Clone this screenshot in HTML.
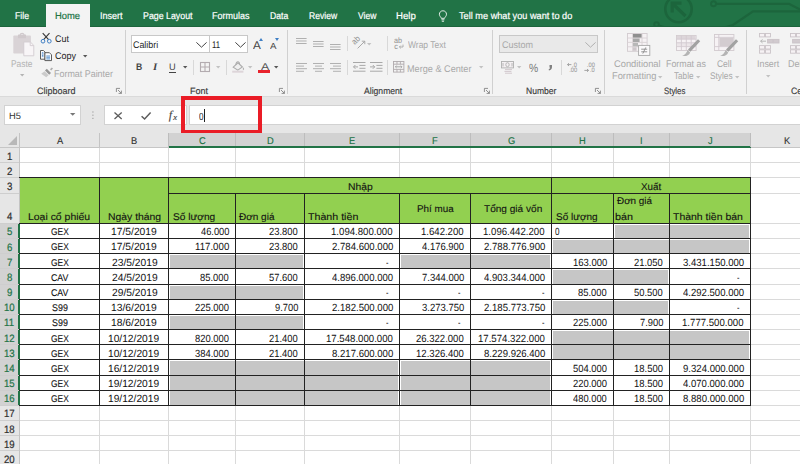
<!DOCTYPE html>
<html><head><meta charset="utf-8"><title>Excel</title>
<style>
html,body{margin:0;padding:0;}
body{width:800px;height:464px;overflow:hidden;background:#fff;position:relative;font-family:"Liberation Sans",sans-serif;text-rendering:geometricPrecision;}
div,span{position:absolute;box-sizing:border-box;white-space:nowrap;}
svg{position:absolute;overflow:visible;}
.x{transform-origin:0 0;line-height:1;}
.sep{width:1px;background:#d0d0d0;}
</style></head><body>

<div style="left:0;top:0;width:800px;height:27px;background:#217346"></div>
<svg style="left:0;top:0" width="800" height="27" viewBox="0 0 800 27"><g fill="none" stroke="#1c653c" stroke-width="2.6">
<circle cx="678.5" cy="9" r="13.2"/>
<path d="M685.5 16 L673 4 M672.2 12.5 L672.2 3.2 L681.5 3.2" stroke-width="3.2"/>
<circle cx="713.5" cy="3.8" r="2.5" stroke-width="1.9"/>
<path d="M716.2 3.8 L789 3.8 L800 9.5" stroke-width="2.3"/>
<path d="M800 11.3 L753 11.3 L733 25 L726 27" stroke-width="2.3"/>
<circle cx="656.5" cy="24.5" r="2.3" stroke-width="1.9"/>
<path d="M658.8 25.5 L664 27" stroke-width="2"/>
</g></svg>
<div style="left:0;top:26px;width:800px;height:1px;background:#1c643c"></div>
<div style="left:46px;top:4px;width:44px;height:24px;background:#f3f3f3"></div>
<svg style="left:438.2px;top:9.8px" width="10.4" height="13" viewBox="0 0 12 15"><g fill="none" stroke="#fff" stroke-width="1">
<path d="M3.8 9.6 C3.6 8.2 1.6 7.2 1.6 4.9 C1.6 2.6 3.4 0.9 5.7 0.9 C8 0.9 9.8 2.6 9.8 4.9 C9.8 7.2 7.8 8.2 7.6 9.6 Z"/>
<path d="M4 11.3 H7.4 M4.4 13 H7"/></g></svg>
<div style="left:0;top:27px;width:800px;height:70px;background:#f3f3f3"></div>
<div style="left:46px;top:26px;width:44px;height:2px;background:#f3f3f3"></div>
<div style="left:0;top:97px;width:800px;height:51px;background:#e6e6e6"></div>
<div style="left:0;top:96px;width:800px;height:1px;background:#dadada"></div>
<div class="sep" style="left:125px;top:30px;height:64px"></div>
<div class="sep" style="left:287px;top:30px;height:64px"></div>
<div class="sep" style="left:492px;top:30px;height:64px"></div>
<div class="sep" style="left:604px;top:30px;height:64px"></div>
<div class="sep" style="left:746px;top:30px;height:64px"></div>
<div class="sep" style="left:193px;top:60px;height:15px;background:#d8d8d8"></div>
<div class="sep" style="left:226px;top:60px;height:15px;background:#d8d8d8"></div>
<div class="sep" style="left:347px;top:36px;height:15px;background:#d8d8d8"></div>
<div class="sep" style="left:387px;top:36px;height:15px;background:#d8d8d8"></div>
<div class="sep" style="left:347px;top:60px;height:15px;background:#d8d8d8"></div>
<div class="sep" style="left:387px;top:60px;height:15px;background:#d8d8d8"></div>
<div class="sep" style="left:561px;top:60px;height:15px;background:#d8d8d8"></div>
<svg style="left:13px;top:33px" width="22" height="23" viewBox="0 0 22 23">
<rect x="0.3" y="2.6" width="17.6" height="18" rx="0.8" fill="#d9d3d6"/>
<rect x="5" y="1.6" width="8" height="3.6" fill="#d0c9cc"/>
<path d="M7 2 a2.2 2.2 0 0 1 4.2 0" fill="none" stroke="#d0c9cc" stroke-width="1.2"/>
<path d="M10.8 9 H17.4 L20.8 12.4 V22.8 H10.8 Z" fill="#f8f5f7" stroke="#d2ccd0" stroke-width="0.9"/>
<path d="M17.2 9.2 V12.6 H20.6" fill="none" stroke="#d2ccd0" stroke-width="0.9"/>
</svg>
<svg style="left:19.6px;top:74.39999999999999px" width="4.4" height="2.4" viewBox="0 0 4.4 2.4"><path d="M0 0 H4.4 L2.2 2.4 Z" fill="#b4b4b4"/></svg>
<svg style="left:39.9px;top:32.6px" width="12" height="11" viewBox="0 0 12 11"><g fill="none">
<path d="M2.7 0.1 L8.6 6.6 M9.5 0.1 L3.6 6.6" stroke="#3a3a3a" stroke-width="1.15"/>
<circle cx="3" cy="8.2" r="1.85" stroke="#3f7fc4" stroke-width="1"/>
<circle cx="9.3" cy="8.2" r="1.85" stroke="#3f7fc4" stroke-width="1"/></g></svg>
<svg style="left:40.3px;top:49.8px" width="12" height="11" viewBox="0 0 12 11"><g>
<path d="M0.5 0.5 H3.4 L5 2.1 V9.2 H0.5 Z" fill="#fff" stroke="#4a4a4a" stroke-width="0.9"/>
<rect x="1.5" y="2.4" width="2.4" height="5" fill="#cfe0f2"/>
<path d="M2.7 2.2 V3.6 M2.7 4.6 V6.6" stroke="#3f7fc4" stroke-width="0.9"/>
<path d="M4.9 2.7 H9.4 L11.5 4.8 V10.6 H4.9 Z" fill="#fff" stroke="#4a4a4a" stroke-width="0.9"/>
<rect x="6.2" y="5.4" width="4" height="4" fill="#c6dbf0"/>
<path d="M6.4 6 H10 M6.4 7.6 H10 M6.4 9 H10" stroke="#5b93cf" stroke-width="0.7"/></g></svg>
<svg style="left:82.8px;top:54.8px" width="4.4" height="2.4" viewBox="0 0 4.4 2.4"><path d="M0 0 H4.4 L2.2 2.4 Z" fill="#555"/></svg>
<svg style="left:40.5px;top:67.4px" width="12" height="10.5" viewBox="0 0 12 10.5"><g>
<path d="M9 2.2 L10.8 0.4 L12 1.6 L10.2 3.4 Z" fill="#ababab"/>
<path d="M5.8 1.8 L10 6 L8.2 7.8 L4 3.6 Z" fill="#979797"/>
<path d="M3.6 4.2 L7.6 8.2 L5.2 10.3 L0.2 6.8 Z" fill="#cbcbcb"/></g></svg>
<svg style="left:116px;top:88.4px" width="6" height="6" viewBox="0 0 6 6"><g fill="none" stroke="#777" stroke-width="0.8"><path d="M0.4 4 V0.4 H4"/><path d="M2 2 L5.4 5.4 M5.4 2.6 V5.4 H2.6"/></g></svg>
<div style="left:131px;top:35px;width:79px;height:18px;background:#fff;border:1px solid #c8c8c8"></div>
<div style="left:209px;top:35px;width:39px;height:18px;background:#fff;border:1px solid #c8c8c8"></div>
<svg style="left:196px;top:42.4px" width="11" height="6" viewBox="0 0 11 6"><path d="M0.4 0.4 L5.5 5.2 L10.6 0.4" fill="none" stroke="#444" stroke-width="1"/></svg>
<svg style="left:234.5px;top:42.4px" width="11" height="6" viewBox="0 0 11 6"><path d="M0.4 0.4 L5.5 5.2 L10.6 0.4" fill="none" stroke="#444" stroke-width="1"/></svg>
<svg style="left:258.8px;top:38.4px" width="4" height="3" viewBox="0 0 4 3"><path d="M0 3 L2 0 L4 3 Z" fill="#3f7fc4"/></svg>
<svg style="left:275.2px;top:38.4px" width="4" height="3" viewBox="0 0 4 3"><path d="M0 0 H4 L2 3 Z" fill="#3f7fc4"/></svg>
<div style="left:169.4px;top:71.6px;width:6.6px;height:1px;background:#444"></div>
<svg style="left:183.0px;top:66.39999999999999px" width="4.4" height="2.4" viewBox="0 0 4.4 2.4"><path d="M0 0 H4.4 L2.2 2.4 Z" fill="#555"/></svg>
<svg style="left:200.4px;top:62.2px" width="10" height="10" viewBox="0 0 10 10"><g fill="none" stroke="#b3acb0" stroke-width="1.1"><rect x="0.5" y="0.5" width="9" height="9"/><path d="M5 0.5 V9.5 M0.5 5 H9.5"/></g></svg>
<svg style="left:216.20000000000002px;top:66.39999999999999px" width="4.4" height="2.4" viewBox="0 0 4.4 2.4"><path d="M0 0 H4.4 L2.2 2.4 Z" fill="#c2c2c2"/></svg>
<svg style="left:232.4px;top:61px" width="13" height="12" viewBox="0 0 13 12"><g fill="none" stroke="#adadad" stroke-width="1.1">
<path d="M1.2 6.2 L6 1.8 L10.4 6 L5.8 9.2 Z" fill="#efefef"/><path d="M3.8 3.8 Q4.4 0.4 6.2 0.8 Q7.6 1.2 7.6 3.2"/></g>
<path d="M11.4 6.2 q1.5 2.2 0 3 q-1.5 -0.8 0 -3" fill="#adadad"/>
<rect x="0.2" y="9.7" width="11.2" height="2" fill="#ddd5d9"/></svg>
<svg style="left:248.4px;top:66.39999999999999px" width="4.4" height="2.4" viewBox="0 0 4.4 2.4"><path d="M0 0 H4.4 L2.2 2.4 Z" fill="#c2c2c2"/></svg>
<div style="left:258px;top:70.4px;width:12px;height:3px;background:#e8232d"></div>
<svg style="left:274.40000000000003px;top:66.39999999999999px" width="4.4" height="2.4" viewBox="0 0 4.4 2.4"><path d="M0 0 H4.4 L2.2 2.4 Z" fill="#555"/></svg>
<svg style="left:278.6px;top:88.4px" width="6" height="6" viewBox="0 0 6 6"><g fill="none" stroke="#777" stroke-width="0.8"><path d="M0.4 4 V0.4 H4"/><path d="M2 2 L5.4 5.4 M5.4 2.6 V5.4 H2.6"/></g></svg>
<svg style="left:296.3px;top:37.8px" width="11" height="7.5" viewBox="0 0 11 7.5"><g stroke="#a4a4a4" stroke-width="0.85"><path d="M0 0.5 H10.6"/><path d="M0 3.0 H10.6"/><path d="M0 5.5 H10.6"/></g></svg>
<svg style="left:313px;top:40.6px" width="11" height="7.5" viewBox="0 0 11 7.5"><g stroke="#a4a4a4" stroke-width="0.85"><path d="M0 0.5 H10.6"/><path d="M0 3.0 H10.6"/><path d="M0 5.5 H10.6"/></g></svg>
<svg style="left:329.7px;top:43.6px" width="11" height="7.5" viewBox="0 0 11 7.5"><g stroke="#a4a4a4" stroke-width="0.85"><path d="M0 0.5 H10.6"/><path d="M0 3.0 H10.6"/><path d="M0 5.5 H10.6"/></g></svg>
<svg style="left:296.3px;top:62.6px" width="11" height="10.4" viewBox="0 0 11 10.4"><g stroke="#a4a4a4" stroke-width="0.85"><path d="M0 0.5 H11"/><path d="M0 3.1 H8"/><path d="M0 5.7 H11"/><path d="M0 8.3 H8"/></g></svg>
<svg style="left:313px;top:62.6px" width="11" height="10.4" viewBox="0 0 11 10.4"><g stroke="#a4a4a4" stroke-width="0.85"><path d="M0.0 0.5 H11.0"/><path d="M2.0 3.1 H9.0"/><path d="M0.0 5.7 H11.0"/><path d="M2.0 8.3 H9.0"/></g></svg>
<svg style="left:329.5px;top:62.6px" width="11" height="10.4" viewBox="0 0 11 10.4"><g stroke="#a4a4a4" stroke-width="0.85"><path d="M0 0.5 H11"/><path d="M3 3.1 H11"/><path d="M0 5.7 H11"/><path d="M3 8.3 H11"/></g></svg>
<svg style="left:352.5px;top:37.4px" width="13" height="12" viewBox="0 0 13 12"><g fill="none" stroke="#a2a2a2" stroke-width="0.9">
<path d="M4.6 11.4 L11.6 4.4 M8.8 4.2 H11.8 V7.2"/></g>
<text x="0" y="0" font-size="8.4" fill="#8e8e8e" font-family="Liberation Sans" transform="translate(1.8 8) rotate(-45) scale(0.88 1)">ab</text></svg>
<svg style="left:367.40000000000003px;top:42.8px" width="4.4" height="2.4" viewBox="0 0 4.4 2.4"><path d="M0 0 H4.4 L2.2 2.4 Z" fill="#c2c2c2"/></svg>
<svg style="left:352.5px;top:62.2px" width="12.5" height="10" viewBox="0 0 12.5 10"><g fill="none" stroke="#a8a8a8" stroke-width="1"><path d="M0 0.5 H12.5 M6.4 3.4 H12.5 M6.4 6.3 H12.5 M0 9.2 H12.5"/><path d="M5 4.9 H0.6 M2.4 3 L0.5 4.9 L2.4 6.8"/></g></svg>
<svg style="left:369.5px;top:62.2px" width="12.5" height="10" viewBox="0 0 12.5 10"><g fill="none" stroke="#a8a8a8" stroke-width="1"><path d="M0 0.5 H12.5 M6.4 3.4 H12.5 M6.4 6.3 H12.5 M0 9.2 H12.5"/><path d="M0 4.9 H4.6 M2.8 3 L4.7 4.9 L2.8 6.8"/></g></svg>
<svg style="left:394px;top:38.4px" width="11" height="11" viewBox="0 0 11 11">
<text x="0" y="5.2" font-size="8" fill="#909090" font-family="Liberation Sans" transform="scale(0.9 1)">ab</text>
<text x="0.2" y="11" font-size="8" fill="#909090" font-family="Liberation Sans" transform="scale(0.9 1)">c</text>
<path d="M9 6.6 V9 H5.4 M6.8 7.6 L5.4 9 L6.8 10.4" fill="none" stroke="#a0a0a0" stroke-width="0.8"/></svg>
<svg style="left:392.8px;top:61.2px" width="11.4" height="11.6" viewBox="0 0 11.4 11.6"><g fill="none" stroke="#b0aaad" stroke-width="0.9">
<rect x="0.5" y="0.5" width="10.4" height="10.6"/><path d="M0.5 3.2 H10.9 M0.5 8.4 H10.9 M4 0.5 V3.2 M7.4 0.5 V3.2 M4 8.4 V11.1 M7.4 8.4 V11.1"/>
<path d="M2.4 5.8 H9 M3.6 4.6 L2.4 5.8 L3.6 7 M7.8 4.6 L9 5.8 L7.8 7" stroke="#a0a0a0"/></g></svg>
<svg style="left:478.6px;top:66.39999999999999px" width="4.4" height="2.4" viewBox="0 0 4.4 2.4"><path d="M0 0 H4.4 L2.2 2.4 Z" fill="#c2c2c2"/></svg>
<svg style="left:483.6px;top:88.4px" width="6" height="6" viewBox="0 0 6 6"><g fill="none" stroke="#777" stroke-width="0.8"><path d="M0.4 4 V0.4 H4"/><path d="M2 2 L5.4 5.4 M5.4 2.6 V5.4 H2.6"/></g></svg>
<div style="left:499px;top:35px;width:99px;height:18px;background:#e9e9e9;border:1px solid #c8c8c8"></div>
<svg style="left:584.6px;top:42.4px" width="11" height="6" viewBox="0 0 11 6"><path d="M0.4 0.4 L5.5 5.2 L10.6 0.4" fill="none" stroke="#b0b0b0" stroke-width="1"/></svg>
<svg style="left:501.2px;top:60.8px" width="13" height="13" viewBox="0 0 13 13"><g fill="none" stroke="#b0b0b0" stroke-width="0.9">
<rect x="0.5" y="0.5" width="12" height="6.4" fill="#f4f0f2"/><ellipse cx="6.5" cy="3.7" rx="1.7" ry="2"/><path d="M2 2 V5.4 M11 2 V5.4"/></g>
<g fill="none" stroke="#d2c8cd" stroke-width="1"><path d="M4 8.6 H11 M3.4 10.4 H10.4 M4 12.2 H11"/></g></svg>
<svg style="left:517.3px;top:66.39999999999999px" width="4.4" height="2.4" viewBox="0 0 4.4 2.4"><path d="M0 0 H4.4 L2.2 2.4 Z" fill="#c2c2c2"/></svg>
<svg style="left:547.6px;top:64.6px" width="4.4" height="5.6" viewBox="0 0 4.4 5.6"><path d="M1.5 0 H4 V2 Q4 4.6 1 5.4 L0.6 4.6 Q2 4 2 2.4 H1.5 Z" fill="#808080"/></svg>
<svg style="left:567px;top:61.8px" width="12" height="11" viewBox="0 0 12 11"><g fill="#8e8e8e" font-family="Liberation Sans" font-size="6.4"><text x="5.6" y="4.6" transform="scale(0.9 1)">.0</text><text x="2.4" y="10.4" transform="scale(0.9 1)">.00</text><path d="M4.4 2.6 H0.6 M2 1.2 L0.5 2.6 L2 4" fill="none" stroke="#8e8e8e" stroke-width="0.8"/></g></svg>
<svg style="left:584.4px;top:61.8px" width="12" height="11" viewBox="0 0 12 11"><g fill="#8e8e8e" font-family="Liberation Sans" font-size="6.4"><text x="3.2" y="4.6" transform="scale(0.9 1)">.00</text><text x="6.6" y="10.4" transform="scale(0.9 1)">.0</text><path d="M0.4 8.4 H4.4 M3 7 L4.5 8.4 L3 9.8" fill="none" stroke="#8e8e8e" stroke-width="0.8"/></g></svg>
<svg style="left:595px;top:88.4px" width="6" height="6" viewBox="0 0 6 6"><g fill="none" stroke="#777" stroke-width="0.8"><path d="M0.4 4 V0.4 H4"/><path d="M2 2 L5.4 5.4 M5.4 2.6 V5.4 H2.6"/></g></svg>
<svg style="left:626.8px;top:33.2px" width="24" height="23" viewBox="0 0 24 23">
<rect x="0.5" y="0.5" width="19.6" height="17.8" fill="#f6f2f4" stroke="#d2cbcf" stroke-width="0.9"/>
<path d="M5.6 0.5 V18.2 M15 0.5 V18.2 M0.5 5 H20 M0.5 9.4 H20 M0.5 13.8 H20" stroke="#d8d1d5" stroke-width="0.9" fill="none"/>
<rect x="6" y="1" width="8.6" height="3.6" fill="#8f8f8f"/><rect x="6" y="5.5" width="6.6" height="3.5" fill="#a8a8a8"/>
<rect x="6" y="9.9" width="5" height="3.5" fill="#b8b8b8"/><rect x="6" y="14.3" width="3.6" height="3.5" fill="#cfc8cc"/>
<rect x="11.6" y="12.4" width="11.2" height="10" fill="#fbfafb" stroke="#a8a8a8" stroke-width="0.9"/>
<path d="M14.2 16.2 H20.2 M14.2 18.8 H20.2 M18.8 14.4 L15.8 20.6" stroke="#8c8c8c" stroke-width="0.9" fill="none"/></svg>
<svg style="left:658.4px;top:76.39999999999999px" width="4.4" height="2.4" viewBox="0 0 4.4 2.4"><path d="M0 0 H4.4 L2.2 2.4 Z" fill="#c2c2c2"/></svg>
<svg style="left:675.6px;top:33.6px" width="25" height="23" viewBox="0 0 25 23">
<rect x="0.5" y="1.5" width="19.6" height="15" fill="#f6f2f4" stroke="#d2cbcf" stroke-width="0.9"/>
<rect x="0.9" y="1.9" width="18.8" height="3.2" fill="#ddd6da"/>
<rect x="0.9" y="8.6" width="18.8" height="3.4" fill="#ebe5e8"/>
<path d="M5.4 1.5 V16.5 M10.3 1.5 V16.5 M15.2 1.5 V16.5 M0.5 5.2 H20 M0.5 8.8 H20 M0.5 12.6 H20" stroke="#d2cbd0" stroke-width="0.9" fill="none"/>
<path d="M24.2 7.2 L22 5.2 L12 15.6 L14.4 17.8 Z" fill="#a2a2a2"/>
<path d="M11.6 16 L14.2 18.4 Q12.2 22.8 6.2 22 Q10 20.6 11.6 16 Z" fill="#b4b4b4"/></svg>
<svg style="left:695.8px;top:76.39999999999999px" width="4.4" height="2.4" viewBox="0 0 4.4 2.4"><path d="M0 0 H4.4 L2.2 2.4 Z" fill="#c2c2c2"/></svg>
<svg style="left:713.8px;top:33.6px" width="25" height="23" viewBox="0 0 25 23">
<rect x="0.5" y="0.5" width="19.4" height="16" fill="#f6f2f4" stroke="#d2cbcf" stroke-width="0.9"/>
<path d="M0.5 3.4 H19.8 M0.5 12.6 H19.8 M4.8 0.5 V16.5" stroke="#d2cbd0" stroke-width="0.9" fill="none"/>
<rect x="5.4" y="3.9" width="14" height="8.2" fill="#d3ccd0"/>
<path d="M24.2 7.2 L22 5.2 L12 15.6 L14.4 17.8 Z" fill="#a2a2a2"/>
<path d="M11.6 16 L14.2 18.4 Q12.2 22.8 6.2 22 Q10 20.6 11.6 16 Z" fill="#b4b4b4"/></svg>
<svg style="left:734.5999999999999px;top:76.39999999999999px" width="4.4" height="2.4" viewBox="0 0 4.4 2.4"><path d="M0 0 H4.4 L2.2 2.4 Z" fill="#c2c2c2"/></svg>
<svg style="left:758.6px;top:33.4px" width="21" height="21" viewBox="0 0 21 21"><g fill="#f6f2f4" stroke="#cbc4c8" stroke-width="0.9">
<rect x="0.5" y="0.5" width="5" height="3.4"/><rect x="6.5" y="0.5" width="5" height="3.4"/>
<rect x="8.6" y="6.4" width="5.4" height="3.6" fill="#d2cbcf"/><rect x="14.6" y="6.4" width="5.4" height="3.6" fill="#d2cbcf"/>
<rect x="0.5" y="12.6" width="5" height="3.4"/><rect x="6.5" y="12.6" width="5" height="3.4"/>
<rect x="0.5" y="16.8" width="5" height="3.4"/><rect x="6.5" y="16.8" width="5" height="3.4"/>
<path d="M7 8.2 H1.6 M3.6 6.4 L1.6 8.2 L3.6 10" fill="none" stroke="#b0b0b0"/></g></svg>
<svg style="left:766.0px;top:74.6px" width="4.4" height="2.4" viewBox="0 0 4.4 2.4"><path d="M0 0 H4.4 L2.2 2.4 Z" fill="#c2c2c2"/></svg>
<svg style="left:790px;top:33.4px" width="12" height="21" viewBox="0 0 12 21"><g fill="#f6f2f4" stroke="#cbc4c8" stroke-width="0.9">
<rect x="0.5" y="0.5" width="5" height="3.4"/><rect x="6.5" y="0.5" width="5" height="3.4"/>
<rect x="2.6" y="6.4" width="9" height="3.6" fill="#d2cbcf"/>
<rect x="0.5" y="12.6" width="5" height="3.4"/><rect x="6.5" y="12.6" width="5" height="3.4"/>
<rect x="0.5" y="16.8" width="5" height="3.4"/><rect x="6.5" y="16.8" width="5" height="3.4"/></g></svg>
<div style="left:4px;top:105px;width:77px;height:20px;background:#fff;border:1px solid #d2d2d2"></div>
<svg style="left:70.1px;top:113.39999999999999px" width="5.4" height="2.8" viewBox="0 0 5.4 2.8"><path d="M0 0 H5.4 L2.7 2.8 Z" fill="#777"/></svg>
<svg style="left:91.6px;top:111px" width="2" height="9" viewBox="0 0 2 9"><g fill="#a4a4a4"><rect x="0.3" y="0.4" width="1.2" height="1.2"/><rect x="0.3" y="3.6" width="1.2" height="1.2"/><rect x="0.3" y="6.8" width="1.2" height="1.2"/></g></svg>
<div style="left:104px;top:105px;width:83px;height:20px;background:#fff;border:1px solid #d2d2d2"></div>
<div style="left:189px;top:105px;width:612px;height:20px;background:#fff;border:1px solid #d2d2d2"></div>
<svg style="left:114.2px;top:111.6px" width="8.2" height="7.6" viewBox="0 0 8.2 7.6"><path d="M0.5 0.5 L7.7 7.1 M7.7 0.5 L0.5 7.1" stroke="#5c5c5c" stroke-width="1.3" fill="none"/></svg>
<svg style="left:141px;top:111.6px" width="10" height="8" viewBox="0 0 10 8"><path d="M0.6 4.2 L3.6 7 L9.6 0.6" stroke="#5c5c5c" stroke-width="1.5" fill="none"/></svg>
<div style="left:204.2px;top:109.2px;width:1px;height:12.6px;background:#222"></div>
<div style="left:181px;top:96px;width:81px;height:38px;border:4px solid #ea1c26"></div>
<div style="left:0;top:133px;width:800px;height:15px;background:#e6e6e6"></div>
<div style="left:169px;top:133px;width:582px;height:13px;background:#d2d2d2"></div>
<div style="left:169px;top:146px;width:582px;height:2px;background:#217346"></div>
<div style="left:0;top:147px;width:169px;height:1px;background:#c6c6c6"></div>
<div style="left:751px;top:147px;width:49px;height:1px;background:#c6c6c6"></div>
<svg style="left:8px;top:136px" width="9" height="9" viewBox="0 0 9 9"><path d="M9 0 V9 H0 Z" fill="#b8b8b8"/></svg>
<div style="left:19px;top:133px;width:1px;height:14px;background:#c4c4c4"></div>
<div style="left:99px;top:133px;width:1px;height:14px;background:#c4c4c4"></div>
<div style="left:168px;top:133px;width:1px;height:14px;background:#bdbdbd"></div>
<div style="left:235px;top:133px;width:1px;height:13px;background:#bdbdbd"></div>
<div style="left:304px;top:133px;width:1px;height:13px;background:#bdbdbd"></div>
<div style="left:399px;top:133px;width:1px;height:13px;background:#bdbdbd"></div>
<div style="left:470px;top:133px;width:1px;height:13px;background:#bdbdbd"></div>
<div style="left:551px;top:133px;width:1px;height:13px;background:#bdbdbd"></div>
<div style="left:613px;top:133px;width:1px;height:13px;background:#bdbdbd"></div>
<div style="left:669px;top:133px;width:1px;height:13px;background:#bdbdbd"></div>
<div style="left:750px;top:133px;width:1px;height:14px;background:#bdbdbd"></div>
<div style="left:0;top:148px;width:20px;height:316px;background:#e6e6e6"></div>
<div style="left:0;top:224px;width:18px;height:182px;background:#d2d2d2"></div>
<div style="left:18px;top:224px;width:2px;height:182px;background:#217346"></div>
<div style="left:19px;top:148px;width:1px;height:76px;background:#c4c4c4"></div>
<div style="left:19px;top:406px;width:1px;height:59px;background:#c4c4c4"></div>
<div style="left:99px;top:148px;width:1px;height:316px;background:#dadada"></div>
<div style="left:168px;top:148px;width:1px;height:316px;background:#dadada"></div>
<div style="left:235px;top:148px;width:1px;height:316px;background:#dadada"></div>
<div style="left:304px;top:148px;width:1px;height:316px;background:#dadada"></div>
<div style="left:399px;top:148px;width:1px;height:316px;background:#dadada"></div>
<div style="left:470px;top:148px;width:1px;height:316px;background:#dadada"></div>
<div style="left:551px;top:148px;width:1px;height:316px;background:#dadada"></div>
<div style="left:613px;top:148px;width:1px;height:316px;background:#dadada"></div>
<div style="left:669px;top:148px;width:1px;height:316px;background:#dadada"></div>
<div style="left:750px;top:148px;width:1px;height:316px;background:#dadada"></div>
<div style="left:20px;top:162px;width:780px;height:1px;background:#dadada"></div>
<div style="left:0;top:162px;width:19px;height:1px;background:#cecece"></div>
<div style="left:20px;top:177px;width:780px;height:1px;background:#dadada"></div>
<div style="left:0;top:177px;width:19px;height:1px;background:#cecece"></div>
<div style="left:20px;top:193px;width:780px;height:1px;background:#dadada"></div>
<div style="left:0;top:193px;width:19px;height:1px;background:#cecece"></div>
<div style="left:20px;top:223px;width:780px;height:1px;background:#dadada"></div>
<div style="left:0;top:223px;width:19px;height:1px;background:#cecece"></div>
<div style="left:20px;top:238px;width:780px;height:1px;background:#dadada"></div>
<div style="left:0;top:238px;width:19px;height:1px;background:#cecece"></div>
<div style="left:20px;top:253px;width:780px;height:1px;background:#dadada"></div>
<div style="left:0;top:253px;width:19px;height:1px;background:#cecece"></div>
<div style="left:20px;top:268px;width:780px;height:1px;background:#dadada"></div>
<div style="left:0;top:268px;width:19px;height:1px;background:#cecece"></div>
<div style="left:20px;top:284px;width:780px;height:1px;background:#dadada"></div>
<div style="left:0;top:284px;width:19px;height:1px;background:#cecece"></div>
<div style="left:20px;top:299px;width:780px;height:1px;background:#dadada"></div>
<div style="left:0;top:299px;width:19px;height:1px;background:#cecece"></div>
<div style="left:20px;top:314px;width:780px;height:1px;background:#dadada"></div>
<div style="left:0;top:314px;width:19px;height:1px;background:#cecece"></div>
<div style="left:20px;top:329px;width:780px;height:1px;background:#dadada"></div>
<div style="left:0;top:329px;width:19px;height:1px;background:#cecece"></div>
<div style="left:20px;top:344px;width:780px;height:1px;background:#dadada"></div>
<div style="left:0;top:344px;width:19px;height:1px;background:#cecece"></div>
<div style="left:20px;top:359px;width:780px;height:1px;background:#dadada"></div>
<div style="left:0;top:359px;width:19px;height:1px;background:#cecece"></div>
<div style="left:20px;top:375px;width:780px;height:1px;background:#dadada"></div>
<div style="left:0;top:375px;width:19px;height:1px;background:#cecece"></div>
<div style="left:20px;top:390px;width:780px;height:1px;background:#dadada"></div>
<div style="left:0;top:390px;width:19px;height:1px;background:#cecece"></div>
<div style="left:20px;top:405px;width:780px;height:1px;background:#dadada"></div>
<div style="left:0;top:405px;width:19px;height:1px;background:#cecece"></div>
<div style="left:20px;top:420px;width:780px;height:1px;background:#dadada"></div>
<div style="left:0;top:420px;width:19px;height:1px;background:#cecece"></div>
<div style="left:20px;top:435px;width:780px;height:1px;background:#dadada"></div>
<div style="left:0;top:435px;width:19px;height:1px;background:#cecece"></div>
<div style="left:20px;top:450px;width:780px;height:1px;background:#dadada"></div>
<div style="left:0;top:450px;width:19px;height:1px;background:#cecece"></div>
<div style="left:20px;top:466px;width:780px;height:1px;background:#dadada"></div>
<div style="left:0;top:466px;width:19px;height:1px;background:#cecece"></div>
<div style="left:20px;top:178px;width:730px;height:45px;background:#92d050"></div>
<div style="left:20px;top:224px;width:730px;height:181px;background:#fff"></div>
<div style="left:615px;top:225px;width:133.5px;height:12.5px;background:#c6c6c6"></div>
<div style="left:553px;top:240px;width:195.5px;height:12.5px;background:#c6c6c6"></div>
<div style="left:170px;top:255px;width:132.5px;height:12.5px;background:#c6c6c6"></div>
<div style="left:401px;top:255px;width:148.5px;height:12.5px;background:#c6c6c6"></div>
<div style="left:553px;top:270px;width:114.5px;height:13.5px;background:#c6c6c6"></div>
<div style="left:170px;top:286px;width:132.5px;height:12.5px;background:#c6c6c6"></div>
<div style="left:553px;top:301px;width:114.5px;height:12.5px;background:#c6c6c6"></div>
<div style="left:170px;top:316px;width:132.5px;height:12.5px;background:#c6c6c6"></div>
<div style="left:553px;top:331px;width:195.5px;height:27.5px;background:#c6c6c6"></div>
<div style="left:170px;top:361px;width:227.5px;height:43.5px;background:#c6c6c6"></div>
<div style="left:401px;top:361px;width:148.5px;height:43.5px;background:#c6c6c6"></div>
<div style="left:19px;top:177px;width:732px;height:1px;background:#222"></div>
<div style="left:168px;top:193px;width:583px;height:1px;background:#222"></div>
<div style="left:19px;top:223px;width:732px;height:1px;background:#222"></div>
<div style="left:19px;top:238px;width:732px;height:1px;background:#222"></div>
<div style="left:19px;top:253px;width:732px;height:1px;background:#222"></div>
<div style="left:19px;top:268px;width:732px;height:1px;background:#222"></div>
<div style="left:19px;top:284px;width:732px;height:1px;background:#222"></div>
<div style="left:19px;top:299px;width:732px;height:1px;background:#222"></div>
<div style="left:19px;top:314px;width:732px;height:1px;background:#222"></div>
<div style="left:19px;top:329px;width:732px;height:1px;background:#222"></div>
<div style="left:19px;top:344px;width:732px;height:1px;background:#222"></div>
<div style="left:19px;top:359px;width:732px;height:1px;background:#222"></div>
<div style="left:19px;top:375px;width:732px;height:1px;background:#222"></div>
<div style="left:19px;top:390px;width:732px;height:1px;background:#222"></div>
<div style="left:19px;top:405px;width:732px;height:1px;background:#222"></div>
<div style="left:99px;top:177px;width:1px;height:229px;background:#222"></div>
<div style="left:168px;top:177px;width:1px;height:229px;background:#222"></div>
<div style="left:551px;top:177px;width:1px;height:229px;background:#222"></div>
<div style="left:750px;top:177px;width:1px;height:229px;background:#222"></div>
<div style="left:235px;top:193px;width:1px;height:213px;background:#222"></div>
<div style="left:304px;top:193px;width:1px;height:213px;background:#222"></div>
<div style="left:399px;top:193px;width:1px;height:213px;background:#222"></div>
<div style="left:470px;top:193px;width:1px;height:213px;background:#222"></div>
<div style="left:613px;top:193px;width:1px;height:213px;background:#222"></div>
<div style="left:669px;top:193px;width:1px;height:213px;background:#222"></div>
<span class="x" style="left:14.89px;top:12px;font-size:9.8px;color:#fff;transform:scaleX(0.8879);-webkit-text-stroke:0.2px #fff;">File</span>
<span class="x" style="left:54.93px;top:12px;font-size:9.8px;color:#217346;transform:scaleX(0.9603);-webkit-text-stroke:0.2px #217346;">Home</span>
<span class="x" style="left:99.87px;top:12px;font-size:9.8px;color:#fff;transform:scaleX(0.9200);-webkit-text-stroke:0.2px #fff;">Insert</span>
<span class="x" style="left:142.68px;top:12px;font-size:9.8px;color:#fff;transform:scaleX(0.9002);-webkit-text-stroke:0.2px #fff;">Page Layout</span>
<span class="x" style="left:212.47px;top:12px;font-size:9.8px;color:#fff;transform:scaleX(0.9184);-webkit-text-stroke:0.2px #fff;">Formulas</span>
<span class="x" style="left:270.19px;top:12px;font-size:9.8px;color:#fff;transform:scaleX(0.8822);-webkit-text-stroke:0.2px #fff;">Data</span>
<span class="x" style="left:308.90px;top:12px;font-size:9.8px;color:#fff;transform:scaleX(0.8743);-webkit-text-stroke:0.2px #fff;">Review</span>
<span class="x" style="left:357.70px;top:12px;font-size:9.8px;color:#fff;transform:scaleX(0.8732);-webkit-text-stroke:0.2px #fff;">View</span>
<span class="x" style="left:396.41px;top:12px;font-size:9.8px;color:#fff;transform:scaleX(0.9840);-webkit-text-stroke:0.2px #fff;">Help</span>
<span class="x" style="left:458.71px;top:12px;font-size:9.8px;color:#fff;transform:scaleX(0.9370);-webkit-text-stroke:0.2px #fff;">Tell me what you want to do</span>
<span class="x" style="left:10.79px;top:60px;font-size:9.7px;color:#b2b2b2;transform:scaleX(0.8646);">Paste</span>
<span class="x" style="left:54.63px;top:35px;font-size:9.7px;color:#262626;transform:scaleX(0.9252);">Cut</span>
<span class="x" style="left:54.63px;top:52px;font-size:9.7px;color:#262626;transform:scaleX(0.9285);">Copy</span>
<span class="x" style="left:54.36px;top:70px;font-size:9.7px;color:#a8a8a8;transform:scaleX(0.9207);">Format Painter</span>
<span class="x" style="left:36.56px;top:87px;font-size:9.2px;color:#3a3a3a;transform:scaleX(0.9789);-webkit-text-stroke:0.15px #3a3a3a;">Clipboard</span>
<span class="x" style="left:133.43px;top:41px;font-size:9.7px;color:#262626;transform:scaleX(0.9158);">Calibri</span>
<span class="x" style="left:211.84px;top:41px;font-size:9.7px;color:#262626;transform:scaleX(0.8023);">11</span>
<span class="x" style="left:252.90px;top:41px;font-size:11.4px;color:#444;transform:scaleX(1.0263);">A</span>
<span class="x" style="left:269.60px;top:42px;font-size:8.8px;color:#444;transform:scaleX(1.1017);">A</span>
<span class="x" style="left:135.66px;top:63px;font-size:9.6px;color:#444;transform:scaleX(0.8983);font-weight:bold;">B</span>
<span class="x" style="left:153.31px;top:63px;font-size:10px;color:#444;transform:scaleX(1.0930);font-family:'Liberation Serif',serif;font-weight:bold;font-style:italic;">I</span>
<span class="x" style="left:169.23px;top:63px;font-size:9.6px;color:#444;transform:scaleX(0.9636);">U</span>
<span class="x" style="left:260.80px;top:63px;font-size:9.9px;color:#555;transform:scaleX(1.2576);">A</span>
<span class="x" style="left:190.31px;top:87px;font-size:9.2px;color:#3a3a3a;transform:scaleX(0.9857);-webkit-text-stroke:0.15px #3a3a3a;">Font</span>
<span class="x" style="left:407.70px;top:41px;font-size:9.7px;color:#a8a8a8;transform:scaleX(0.8738);">Wrap Text</span>
<span class="x" style="left:407.04px;top:65px;font-size:9.7px;color:#a8a8a8;transform:scaleX(0.9425);">Merge &amp; Center</span>
<span class="x" style="left:363.95px;top:87px;font-size:9.2px;color:#3a3a3a;transform:scaleX(0.9363);-webkit-text-stroke:0.15px #3a3a3a;">Alignment</span>
<span class="x" style="left:501.58px;top:41px;font-size:9.7px;color:#a8a8a8;transform:scaleX(0.9325);">Custom</span>
<span class="x" style="left:528.86px;top:62px;font-size:12px;color:#7a7a7a;transform:scaleX(0.8586);">%</span>
<span class="x" style="left:526.30px;top:87px;font-size:9.2px;color:#3a3a3a;transform:scaleX(0.9309);-webkit-text-stroke:0.15px #3a3a3a;">Number</span>
<span class="x" style="left:614.32px;top:60px;font-size:9.7px;color:#a8a8a8;transform:scaleX(0.9616);">Conditional</span>
<span class="x" style="left:612.03px;top:72px;font-size:9.7px;color:#a8a8a8;transform:scaleX(0.9597);">Formatting</span>
<span class="x" style="left:666.31px;top:60px;font-size:9.7px;color:#a8a8a8;transform:scaleX(0.9153);">Format as</span>
<span class="x" style="left:674.28px;top:72px;font-size:9.7px;color:#a8a8a8;transform:scaleX(0.8409);">Table</span>
<span class="x" style="left:716.85px;top:60px;font-size:9.7px;color:#a8a8a8;transform:scaleX(0.8728);">Cell</span>
<span class="x" style="left:709.86px;top:72px;font-size:9.7px;color:#a8a8a8;transform:scaleX(0.8572);">Styles</span>
<span class="x" style="left:664.36px;top:87px;font-size:9.2px;color:#3a3a3a;transform:scaleX(0.8521);-webkit-text-stroke:0.15px #3a3a3a;">Styles</span>
<span class="x" style="left:756.97px;top:60px;font-size:9.7px;color:#a8a8a8;transform:scaleX(0.9163);">Insert</span>
<span class="x" style="left:787.55px;top:60px;font-size:9.7px;color:#a8a8a8;transform:scaleX(0.9300);">Delete</span>
<span class="x" style="left:791.22px;top:87px;font-size:9.2px;color:#3a3a3a;transform:scaleX(0.9500);-webkit-text-stroke:0.15px #3a3a3a;">Cells</span>
<span class="x" style="left:9.09px;top:112px;font-size:9.2px;color:#333;transform:scaleX(1.0145);">H5</span>
<span class="x" style="left:168.70px;top:109px;font-size:12px;color:#444;transform:scaleX(1.0000);font-family:'Liberation Serif',serif;font-style:italic;-webkit-text-stroke:0.15px #444;">f</span>
<span class="x" style="left:173.30px;top:113px;font-size:8.6px;color:#444;transform:scaleX(1.0000);font-family:'Liberation Serif',serif;font-style:italic;-webkit-text-stroke:0.15px #444;">x</span>
<span class="x" style="left:198.71px;top:113px;font-size:10.2px;color:#222;transform:scaleX(0.8000);">0</span>
<span class="x" style="left:56.57px;top:137px;font-size:9.8px;color:#333;transform:scaleX(0.9500);-webkit-text-stroke:0.15px #333;">A</span>
<span class="x" style="left:130.92px;top:137px;font-size:9.8px;color:#333;transform:scaleX(0.9500);-webkit-text-stroke:0.15px #333;">B</span>
<span class="x" style="left:198.78px;top:137px;font-size:9.8px;color:#217346;transform:scaleX(0.9500);-webkit-text-stroke:0.15px #217346;">C</span>
<span class="x" style="left:266.64px;top:137px;font-size:9.8px;color:#217346;transform:scaleX(0.9500);-webkit-text-stroke:0.15px #217346;">D</span>
<span class="x" style="left:348.88px;top:137px;font-size:9.8px;color:#217346;transform:scaleX(0.9500);-webkit-text-stroke:0.15px #217346;">E</span>
<span class="x" style="left:432.16px;top:137px;font-size:9.8px;color:#217346;transform:scaleX(0.9500);-webkit-text-stroke:0.15px #217346;">F</span>
<span class="x" style="left:507.73px;top:137px;font-size:9.8px;color:#217346;transform:scaleX(0.9500);-webkit-text-stroke:0.15px #217346;">G</span>
<span class="x" style="left:579.33px;top:137px;font-size:9.8px;color:#217346;transform:scaleX(0.9500);-webkit-text-stroke:0.15px #217346;">H</span>
<span class="x" style="left:640.37px;top:137px;font-size:9.8px;color:#217346;transform:scaleX(0.9500);-webkit-text-stroke:0.15px #217346;">I</span>
<span class="x" style="left:708.16px;top:137px;font-size:9.8px;color:#217346;transform:scaleX(0.9500);-webkit-text-stroke:0.15px #217346;">J</span>
<span class="x" style="left:783.73px;top:137px;font-size:9.8px;color:#333;transform:scaleX(0.9500);-webkit-text-stroke:0.15px #333;">K</span>
<span class="x" style="left:6.56px;top:152px;font-size:10.7px;color:#2e2e2e;transform:scaleX(0.9000);-webkit-text-stroke:0.2px #2e2e2e;">1</span>
<span class="x" style="left:6.70px;top:167px;font-size:10.7px;color:#2e2e2e;transform:scaleX(0.9000);-webkit-text-stroke:0.2px #2e2e2e;">2</span>
<span class="x" style="left:6.74px;top:182px;font-size:10.7px;color:#2e2e2e;transform:scaleX(0.9000);-webkit-text-stroke:0.2px #2e2e2e;">3</span>
<span class="x" style="left:6.75px;top:212px;font-size:10.7px;color:#2e2e2e;transform:scaleX(0.9000);-webkit-text-stroke:0.2px #2e2e2e;">4</span>
<span class="x" style="left:6.70px;top:227px;font-size:10.7px;color:#217346;transform:scaleX(0.9000);-webkit-text-stroke:0.2px #217346;">5</span>
<span class="x" style="left:6.70px;top:243px;font-size:10.7px;color:#217346;transform:scaleX(0.9000);-webkit-text-stroke:0.2px #217346;">6</span>
<span class="x" style="left:6.70px;top:258px;font-size:10.7px;color:#217346;transform:scaleX(0.9000);-webkit-text-stroke:0.2px #217346;">7</span>
<span class="x" style="left:6.74px;top:273px;font-size:10.7px;color:#217346;transform:scaleX(0.9000);-webkit-text-stroke:0.2px #217346;">8</span>
<span class="x" style="left:6.70px;top:288px;font-size:10.7px;color:#217346;transform:scaleX(0.9000);-webkit-text-stroke:0.2px #217346;">9</span>
<span class="x" style="left:3.84px;top:303px;font-size:10.7px;color:#217346;transform:scaleX(0.9000);-webkit-text-stroke:0.2px #217346;">10</span>
<span class="x" style="left:4.24px;top:318px;font-size:10.7px;color:#217346;transform:scaleX(0.9000);-webkit-text-stroke:0.2px #217346;">11</span>
<span class="x" style="left:3.89px;top:334px;font-size:10.7px;color:#217346;transform:scaleX(0.9000);-webkit-text-stroke:0.2px #217346;">12</span>
<span class="x" style="left:3.89px;top:349px;font-size:10.7px;color:#217346;transform:scaleX(0.9000);-webkit-text-stroke:0.2px #217346;">13</span>
<span class="x" style="left:3.80px;top:364px;font-size:10.7px;color:#217346;transform:scaleX(0.9000);-webkit-text-stroke:0.2px #217346;">14</span>
<span class="x" style="left:3.84px;top:379px;font-size:10.7px;color:#217346;transform:scaleX(0.9000);-webkit-text-stroke:0.2px #217346;">15</span>
<span class="x" style="left:3.89px;top:394px;font-size:10.7px;color:#217346;transform:scaleX(0.9000);-webkit-text-stroke:0.2px #217346;">16</span>
<span class="x" style="left:3.89px;top:409px;font-size:10.7px;color:#2e2e2e;transform:scaleX(0.9000);-webkit-text-stroke:0.2px #2e2e2e;">17</span>
<span class="x" style="left:3.89px;top:425px;font-size:10.7px;color:#2e2e2e;transform:scaleX(0.9000);-webkit-text-stroke:0.2px #2e2e2e;">18</span>
<span class="x" style="left:3.89px;top:440px;font-size:10.7px;color:#2e2e2e;transform:scaleX(0.9000);-webkit-text-stroke:0.2px #2e2e2e;">19</span>
<span class="x" style="left:3.98px;top:455px;font-size:10.7px;color:#2e2e2e;transform:scaleX(0.9000);-webkit-text-stroke:0.2px #2e2e2e;">20</span>
<span class="x" style="left:28.45px;top:213px;font-size:9.8px;color:#111;transform:scaleX(1.0659);-webkit-text-stroke:0.1px #111;">Loại cổ phiếu</span>
<span class="x" style="left:108.05px;top:213px;font-size:9.8px;color:#111;transform:scaleX(1.0600);-webkit-text-stroke:0.1px #111;">Ngày tháng</span>
<span class="x" style="left:347.86px;top:183px;font-size:9.8px;color:#111;transform:scaleX(1.0549);-webkit-text-stroke:0.1px #111;">Nhập</span>
<span class="x" style="left:641.00px;top:183px;font-size:9.8px;color:#111;transform:scaleX(1.0032);-webkit-text-stroke:0.1px #111;">Xuất</span>
<span class="x" style="left:172.79px;top:213px;font-size:9.8px;color:#111;transform:scaleX(1.0371);-webkit-text-stroke:0.1px #111;">Số lượng</span>
<span class="x" style="left:239.20px;top:213px;font-size:9.8px;color:#111;transform:scaleX(1.0200);-webkit-text-stroke:0.1px #111;">Đơn giá</span>
<span class="x" style="left:308.48px;top:213px;font-size:9.8px;color:#111;transform:scaleX(1.0865);-webkit-text-stroke:0.1px #111;">Thành tiền</span>
<span class="x" style="left:417.00px;top:205px;font-size:9.8px;color:#111;transform:scaleX(1.0043);-webkit-text-stroke:0.1px #111;">Phí mua</span>
<span class="x" style="left:483.59px;top:205px;font-size:9.8px;color:#111;transform:scaleX(1.0284);-webkit-text-stroke:0.1px #111;">Tổng giá vốn</span>
<span class="x" style="left:556.29px;top:213px;font-size:9.8px;color:#111;transform:scaleX(1.0195);-webkit-text-stroke:0.1px #111;">Số lượng</span>
<span class="x" style="left:617.00px;top:197px;font-size:9.8px;color:#111;transform:scaleX(1.0085);-webkit-text-stroke:0.1px #111;">Đơn giá</span>
<span class="x" style="left:615.34px;top:213px;font-size:9.8px;color:#111;transform:scaleX(1.0986);-webkit-text-stroke:0.1px #111;">bán</span>
<span class="x" style="left:672.69px;top:213px;font-size:9.8px;color:#111;transform:scaleX(1.0691);-webkit-text-stroke:0.1px #111;">Thành tiền bán</span>
<span class="x" style="left:50.86px;top:228px;font-size:9.8px;color:#111;transform:scaleX(0.8582);-webkit-text-stroke:0.1px #111;">GEX</span>
<span class="x" style="left:111.42px;top:228px;font-size:10.4px;color:#111;transform:scaleX(0.9908);">17/5/2019</span>
<span class="x" style="left:200.54px;top:228px;font-size:10.4px;color:#111;transform:scaleX(0.8961);">46.000</span>
<span class="x" style="left:269.27px;top:228px;font-size:10.4px;color:#111;transform:scaleX(0.9048);">23.800</span>
<span class="x" style="left:331.46px;top:228px;font-size:10.4px;color:#111;transform:scaleX(0.9261);">1.094.800.000</span>
<span class="x" style="left:421.43px;top:228px;font-size:10.4px;color:#111;transform:scaleX(0.9214);">1.642.200</span>
<span class="x" style="left:483.46px;top:228px;font-size:10.4px;color:#111;transform:scaleX(0.9261);">1.096.442.200</span>
<span class="x" style="left:50.86px;top:243px;font-size:9.8px;color:#111;transform:scaleX(0.8582);-webkit-text-stroke:0.1px #111;">GEX</span>
<span class="x" style="left:111.42px;top:243px;font-size:10.4px;color:#111;transform:scaleX(0.9908);">17/5/2019</span>
<span class="x" style="left:194.76px;top:243px;font-size:10.4px;color:#111;transform:scaleX(0.9315);">117.000</span>
<span class="x" style="left:269.27px;top:243px;font-size:10.4px;color:#111;transform:scaleX(0.9048);">23.800</span>
<span class="x" style="left:331.65px;top:243px;font-size:10.4px;color:#111;transform:scaleX(0.9233);">2.784.600.000</span>
<span class="x" style="left:421.89px;top:243px;font-size:10.4px;color:#111;transform:scaleX(0.9113);">4.176.900</span>
<span class="x" style="left:483.65px;top:243px;font-size:10.4px;color:#111;transform:scaleX(0.9233);">2.788.776.900</span>
<span class="x" style="left:50.86px;top:259px;font-size:9.8px;color:#111;transform:scaleX(0.8582);-webkit-text-stroke:0.1px #111;">GEX</span>
<span class="x" style="left:111.62px;top:259px;font-size:10.4px;color:#111;transform:scaleX(0.9865);">23/5/2019</span>
<span class="x" style="left:385.92px;top:259px;font-size:10.4px;color:#111;transform:scaleX(0.7037);">-</span>
<span class="x" style="left:572.77px;top:259px;font-size:10.4px;color:#111;transform:scaleX(0.9118);">163.000</span>
<span class="x" style="left:634.27px;top:259px;font-size:10.4px;color:#111;transform:scaleX(0.9048);">21.050</span>
<span class="x" style="left:682.83px;top:259px;font-size:10.4px;color:#111;transform:scaleX(0.9205);">3.431.150.000</span>
<span class="x" style="left:50.94px;top:274px;font-size:9.8px;color:#111;transform:scaleX(0.9006);-webkit-text-stroke:0.1px #111;">CAV</span>
<span class="x" style="left:111.62px;top:274px;font-size:10.4px;color:#111;transform:scaleX(0.9865);">24/5/2019</span>
<span class="x" style="left:200.36px;top:274px;font-size:10.4px;color:#111;transform:scaleX(0.9018);">85.000</span>
<span class="x" style="left:269.36px;top:274px;font-size:10.4px;color:#111;transform:scaleX(0.9018);">57.600</span>
<span class="x" style="left:331.93px;top:274px;font-size:10.4px;color:#111;transform:scaleX(0.9191);">4.896.000.000</span>
<span class="x" style="left:421.61px;top:274px;font-size:10.4px;color:#111;transform:scaleX(0.9173);">7.344.000</span>
<span class="x" style="left:483.93px;top:274px;font-size:10.4px;color:#111;transform:scaleX(0.9191);">4.903.344.000</span>
<span class="x" style="left:736.92px;top:274px;font-size:10.4px;color:#111;transform:scaleX(0.7037);">-</span>
<span class="x" style="left:50.94px;top:289px;font-size:9.8px;color:#111;transform:scaleX(0.9006);-webkit-text-stroke:0.1px #111;">CAV</span>
<span class="x" style="left:111.62px;top:289px;font-size:10.4px;color:#111;transform:scaleX(0.9865);">29/5/2019</span>
<span class="x" style="left:385.92px;top:289px;font-size:10.4px;color:#111;transform:scaleX(0.7037);">-</span>
<span class="x" style="left:457.92px;top:289px;font-size:10.4px;color:#111;transform:scaleX(0.7037);">-</span>
<span class="x" style="left:541.62px;top:289px;font-size:10.4px;color:#111;transform:scaleX(0.7037);">-</span>
<span class="x" style="left:578.36px;top:289px;font-size:10.4px;color:#111;transform:scaleX(0.9018);">85.000</span>
<span class="x" style="left:634.36px;top:289px;font-size:10.4px;color:#111;transform:scaleX(0.9018);">50.500</span>
<span class="x" style="left:682.93px;top:289px;font-size:10.4px;color:#111;transform:scaleX(0.9191);">4.292.500.000</span>
<span class="x" style="left:51.94px;top:304px;font-size:9.8px;color:#111;transform:scaleX(0.9104);-webkit-text-stroke:0.1px #111;">S99</span>
<span class="x" style="left:111.42px;top:304px;font-size:10.4px;color:#111;transform:scaleX(0.9908);">13/6/2019</span>
<span class="x" style="left:194.96px;top:304px;font-size:10.4px;color:#111;transform:scaleX(0.9069);">225.000</span>
<span class="x" style="left:274.67px;top:304px;font-size:10.4px;color:#111;transform:scaleX(0.8981);">9.700</span>
<span class="x" style="left:331.65px;top:304px;font-size:10.4px;color:#111;transform:scaleX(0.9233);">2.182.500.000</span>
<span class="x" style="left:421.80px;top:304px;font-size:10.4px;color:#111;transform:scaleX(0.9133);">3.273.750</span>
<span class="x" style="left:483.65px;top:304px;font-size:10.4px;color:#111;transform:scaleX(0.9233);">2.185.773.750</span>
<span class="x" style="left:736.92px;top:304px;font-size:10.4px;color:#111;transform:scaleX(0.7037);">-</span>
<span class="x" style="left:51.94px;top:319px;font-size:9.8px;color:#111;transform:scaleX(0.9104);-webkit-text-stroke:0.1px #111;">S99</span>
<span class="x" style="left:111.42px;top:319px;font-size:10.4px;color:#111;transform:scaleX(0.9908);">18/6/2019</span>
<span class="x" style="left:385.92px;top:319px;font-size:10.4px;color:#111;transform:scaleX(0.7037);">-</span>
<span class="x" style="left:457.92px;top:319px;font-size:10.4px;color:#111;transform:scaleX(0.7037);">-</span>
<span class="x" style="left:541.62px;top:319px;font-size:10.4px;color:#111;transform:scaleX(0.7037);">-</span>
<span class="x" style="left:572.96px;top:319px;font-size:10.4px;color:#111;transform:scaleX(0.9069);">225.000</span>
<span class="x" style="left:639.58px;top:319px;font-size:10.4px;color:#111;transform:scaleX(0.9017);">7.900</span>
<span class="x" style="left:682.46px;top:319px;font-size:10.4px;color:#111;transform:scaleX(0.9261);">1.777.500.000</span>
<span class="x" style="left:50.86px;top:335px;font-size:9.8px;color:#111;transform:scaleX(0.8582);-webkit-text-stroke:0.1px #111;">GEX</span>
<span class="x" style="left:108.37px;top:335px;font-size:10.4px;color:#111;transform:scaleX(0.9826);">10/12/2019</span>
<span class="x" style="left:195.05px;top:335px;font-size:10.4px;color:#111;transform:scaleX(0.9044);">820.000</span>
<span class="x" style="left:269.27px;top:335px;font-size:10.4px;color:#111;transform:scaleX(0.9048);">21.400</span>
<span class="x" style="left:326.15px;top:335px;font-size:10.4px;color:#111;transform:scaleX(0.9255);">17.548.000.000</span>
<span class="x" style="left:416.30px;top:335px;font-size:10.4px;color:#111;transform:scaleX(0.9174);">26.322.000</span>
<span class="x" style="left:478.15px;top:335px;font-size:10.4px;color:#111;transform:scaleX(0.9255);">17.574.322.000</span>
<span class="x" style="left:50.86px;top:350px;font-size:9.8px;color:#111;transform:scaleX(0.8582);-webkit-text-stroke:0.1px #111;">GEX</span>
<span class="x" style="left:108.37px;top:350px;font-size:10.4px;color:#111;transform:scaleX(0.9826);">10/12/2019</span>
<span class="x" style="left:195.14px;top:350px;font-size:10.4px;color:#111;transform:scaleX(0.9019);">384.000</span>
<span class="x" style="left:269.27px;top:350px;font-size:10.4px;color:#111;transform:scaleX(0.9048);">21.400</span>
<span class="x" style="left:331.74px;top:350px;font-size:10.4px;color:#111;transform:scaleX(0.9219);">8.217.600.000</span>
<span class="x" style="left:416.12px;top:350px;font-size:10.4px;color:#111;transform:scaleX(0.9210);">12.326.400</span>
<span class="x" style="left:483.74px;top:350px;font-size:10.4px;color:#111;transform:scaleX(0.9219);">8.229.926.400</span>
<span class="x" style="left:50.86px;top:365px;font-size:9.8px;color:#111;transform:scaleX(0.8582);-webkit-text-stroke:0.1px #111;">GEX</span>
<span class="x" style="left:108.37px;top:365px;font-size:10.4px;color:#111;transform:scaleX(0.9826);">16/12/2019</span>
<span class="x" style="left:573.05px;top:365px;font-size:10.4px;color:#111;transform:scaleX(0.9044);">504.000</span>
<span class="x" style="left:634.08px;top:365px;font-size:10.4px;color:#111;transform:scaleX(0.9106);">18.500</span>
<span class="x" style="left:682.74px;top:365px;font-size:10.4px;color:#111;transform:scaleX(0.9219);">9.324.000.000</span>
<span class="x" style="left:50.86px;top:380px;font-size:9.8px;color:#111;transform:scaleX(0.8582);-webkit-text-stroke:0.1px #111;">GEX</span>
<span class="x" style="left:108.37px;top:380px;font-size:10.4px;color:#111;transform:scaleX(0.9826);">19/12/2019</span>
<span class="x" style="left:572.96px;top:380px;font-size:10.4px;color:#111;transform:scaleX(0.9069);">220.000</span>
<span class="x" style="left:634.08px;top:380px;font-size:10.4px;color:#111;transform:scaleX(0.9106);">18.500</span>
<span class="x" style="left:682.93px;top:380px;font-size:10.4px;color:#111;transform:scaleX(0.9191);">4.070.000.000</span>
<span class="x" style="left:50.86px;top:395px;font-size:9.8px;color:#111;transform:scaleX(0.8582);-webkit-text-stroke:0.1px #111;">GEX</span>
<span class="x" style="left:108.37px;top:395px;font-size:10.4px;color:#111;transform:scaleX(0.9826);">19/12/2019</span>
<span class="x" style="left:573.23px;top:395px;font-size:10.4px;color:#111;transform:scaleX(0.8995);">480.000</span>
<span class="x" style="left:634.08px;top:395px;font-size:10.4px;color:#111;transform:scaleX(0.9106);">18.500</span>
<span class="x" style="left:682.74px;top:395px;font-size:10.4px;color:#111;transform:scaleX(0.9219);">8.880.000.000</span>
<span class="x" style="left:554.89px;top:228px;font-size:10.4px;color:#111;transform:scaleX(0.7800);">0</span>
</body></html>
